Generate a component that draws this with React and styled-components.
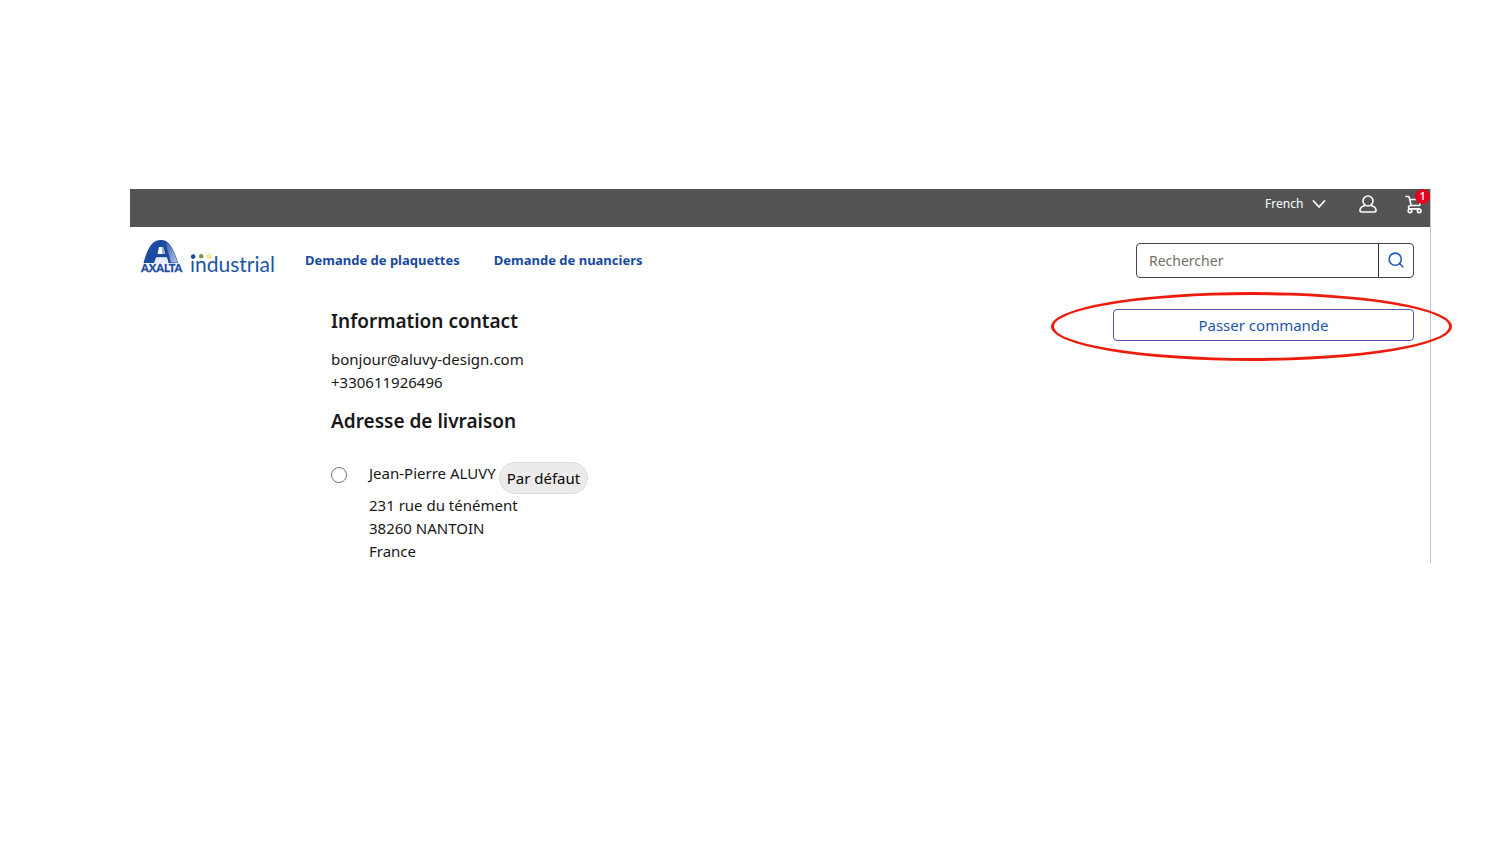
import React from "react";
import styled, { createGlobalStyle } from "styled-components";

const GlobalStyle = createGlobalStyle`
  *, *::before, *::after { box-sizing: border-box; }
  body {
    margin: 0;
    background: #fff;
    color: #181818;
    font-family: "Noto Sans", "Open Sans", sans-serif;
    font-size: 15px;
    line-height: 23px;
  }
  button, input, select { font: inherit; }
`;

const Page = styled.div`
  padding: 189px 69px 40px 130px;
`;

const Store = styled.div`
  border-right: 1px solid #c4c2c2;
`;

const TopBar = styled.div`
  display: flex;
  justify-content: flex-end;
  align-items: center;
  height: 38px;
  padding: 0 7px 8px 0;
  background: #545454;
  color: #fff;
`;

const Language = styled.label`
  display: flex;
  align-items: center;
  gap: 8px;
`;

const LanguageSelect = styled.select`
  appearance: none;
  border: 0;
  padding: 0;
  background: transparent;
  color: inherit;
  font-size: 12px;
  line-height: 16px;
`;

const IconButton = styled.button`
  position: relative;
  display: flex;
  margin: 0 0 0 ${(p) => p.$gap}px;
  padding: 0;
  border: 0;
  background: transparent;
  color: inherit;
`;

const CartCount = styled.span`
  position: absolute;
  top: -5px;
  right: -7px;
  width: 15px;
  height: 15px;
  border-radius: 50%;
  background: #e4001f;
  font-size: 10px;
  font-weight: 600;
  line-height: 14px;
  text-align: center;
`;

const Header = styled.header`
  display: flex;
  align-items: center;
  height: 66px;
  padding: 0 16px 0 9px;
`;

const Logo = styled.a`
  display: flex;
  margin-right: 30px;
`;

const Nav = styled.nav`
  display: flex;
  gap: 34px;
`;

const NavLink = styled.a`
  color: #1749a0;
  font-size: 13px;
  font-weight: 700;
  text-decoration: none;
`;

const Search = styled.form`
  display: flex;
  width: 278px;
  height: 35px;
  margin-left: auto;
  border: 1px solid #444;
  border-radius: 4px;
`;

const SearchInput = styled.input`
  flex: 1;
  min-width: 0;
  padding: 0 12px;
  border: 0;
  background: transparent;
  font-size: 14px;
  &::placeholder { color: #747068; opacity: 1; }
`;

const SearchButton = styled.button`
  display: flex;
  align-items: center;
  justify-content: center;
  width: 35px;
  padding: 0;
  border: 0;
  border-left: 1px solid #333;
  background: transparent;
  color: #1f5bbd;
`;

const Checkout = styled.main`
  display: flex;
  justify-content: space-between;
  align-items: flex-start;
  padding: 16px 16px 0 201px;
`;

const Heading = styled.h2`
  margin: 0 0 15px;
  font-size: 19px;
  font-weight: 600;
  line-height: 24px;
`;

const Contact = styled.p`
  margin: 0 0 15px;
`;

const Option = styled.div`
  display: flex;
  align-items: flex-start;
  gap: 22px;
  padding-top: 14px;
`;

const Radio = styled.input`
  appearance: none;
  width: 16px;
  height: 16px;
  margin: 5px 0 0;
  border: 1px solid #767676;
  border-radius: 50%;
  background: #fff;
`;

const Recipient = styled.div`
  display: flex;
  align-items: flex-start;
  gap: 3px;
`;

const Pill = styled.span`
  height: 32px;
  padding: 0 7px;
  border: 1px solid #dddbda;
  border-radius: 16px;
  background: #ecebea;
  color: #080707;
  line-height: 30px;
`;

const Address = styled.address`
  font-style: normal;
`;

const OrderAction = styled.div`
  position: relative;
  width: 301px;
  margin-bottom: 24px;
`;

const OrderButton = styled.button`
  display: block;
  width: 100%;
  height: 32px;
  padding: 0;
  border: 1px solid #5a50b0;
  border-radius: 4px;
  background: #fff;
  color: #2457ab;
`;

const Highlight = styled.div`
  position: absolute;
  inset: -17px -38px -20px -62px;
  border: 3px solid #ee1c0c;
  border-radius: 50%;
  pointer-events: none;
`;

function AxaltaLogo() {
  return (
    <svg width="136" height="42" viewBox="-1 0 136 42" role="img" aria-label="Axalta industrial">
      <defs>
        <linearGradient id="leg" x1="0" y1="0" x2="1" y2="1">
          <stop offset="0" stopColor="#3f60b0" />
          <stop offset="1" stopColor="#b9c5e4" />
        </linearGradient>
      </defs>
      <path d="M3.500 24C5.500 16 8 10 11 6C14 2 17.500 1 21.500 1C29 1 34 10 38 24H28.500L27 18.500H17L14.500 24Z" fill="#1c4ba3" />
      <path d="M26 3C31.500 6 34.500 14 37.300 23.500H31L26.500 7Z" fill="url(#leg)" />
      <path d="M19 8H23.200L25 15H17.500Z" fill="#fff" />
      <path d="M21.500 8H23.200L25 15H22.500Z" fill="#9aacd6" />
      <path d="M16 18.500H26.500L28 24H14Z" fill="#e8edf7" />
      <text x="1" y="33" fill="#1c4ba3" stroke="#1c4ba3" strokeWidth="0.300" fontFamily="Lato, sans-serif" fontSize="11" fontWeight="900">AXALTA</text>
      <text x="50" y="33" fill="#1c55a8" fontFamily="Lato, sans-serif" fontSize="21">industrial</text>
      <circle cx="53.200" cy="17.500" r="2.300" fill="#1c4ba3" />
      <circle cx="61.200" cy="17.200" r="2.200" fill="#7d9540" />
      <circle cx="69.200" cy="17.200" r="1.700" fill="#fff" stroke="#e6df4a" strokeWidth="1.200" />
    </svg>
  );
}

export default function App() {
  return (
    <>
      <GlobalStyle />
      <Page>
        <Store>
          <TopBar>
            <Language>
              <LanguageSelect aria-label="Langue" defaultValue="French">
                <option>French</option>
              </LanguageSelect>
              <svg width="14" height="10" viewBox="0 0 14 10" fill="none" stroke="currentColor" strokeWidth="1.800" strokeLinecap="round" strokeLinejoin="round">
                <path d="M1.500 2L7 8L12.500 2" />
              </svg>
            </Language>
            <IconButton $gap={33} aria-label="Mon compte">
              <svg width="18" height="18" viewBox="0 0 18 18" fill="none" stroke="currentColor" strokeWidth="1.600" strokeLinejoin="round">
                <circle cx="9" cy="6" r="5" />
                <path d="M5.800 10.500C3 11.300 1 12.900 1 15.200C1 16.300 1.700 17 3 17H15C16.300 17 17 16.300 17 15.200C17 12.900 15 11.300 12.200 10.500" />
              </svg>
            </IconButton>
            <IconButton $gap={28} aria-label="Panier">
              <svg width="18" height="20" viewBox="0 0 18 20" fill="none" stroke="currentColor" strokeWidth="1.600" strokeLinecap="round" strokeLinejoin="round">
                <path d="M1 2.500H3.200C3.800 2.500 4 2.800 4.200 3.400L6.200 11.500H14.500L16.500 5.500H5M6.200 11.500C4.500 11.500 3.500 12.500 3.500 13.600C3.500 14.500 4 14.900 5 14.900H14" />
                <circle cx="5" cy="16.800" r="1.800" />
                <circle cx="14.200" cy="16.800" r="1.800" />
              </svg>
              <CartCount>1</CartCount>
            </IconButton>
          </TopBar>
          <Header>
            <Logo href="#">
              <AxaltaLogo />
            </Logo>
            <Nav>
              <NavLink href="#">Demande de plaquettes</NavLink>
              <NavLink href="#">Demande de nuanciers</NavLink>
            </Nav>
            <Search>
              <SearchInput type="text" placeholder="Rechercher" aria-label="Rechercher" />
              <SearchButton type="button" aria-label="Lancer la recherche">
                <svg width="16" height="16" viewBox="0 0 16 16" fill="none" stroke="currentColor" strokeWidth="1.600" strokeLinecap="round">
                  <circle cx="7.200" cy="7.200" r="6.100" />
                  <path d="M11.500 11.500L14.800 14.800" />
                </svg>
              </SearchButton>
            </Search>
          </Header>
          <Checkout>
            <section>
              <Heading>Information contact</Heading>
              <Contact>
                bonjour@aluvy-design.com
                <br />
                +330611926496
              </Contact>
              <Heading>Adresse de livraison</Heading>
              <Option>
                <Radio type="radio" id="address-1" name="address" />
                <div>
                  <Recipient>
                    <label htmlFor="address-1">Jean-Pierre ALUVY</label>
                    <Pill>Par défaut</Pill>
                  </Recipient>
                  <Address>
                    231 rue du ténément
                    <br />
                    38260 NANTOIN
                    <br />
                    France
                  </Address>
                </div>
              </Option>
            </section>
            <OrderAction>
              <OrderButton type="button">Passer commande</OrderButton>
              <Highlight />
            </OrderAction>
          </Checkout>
        </Store>
      </Page>
    </>
  );
}
